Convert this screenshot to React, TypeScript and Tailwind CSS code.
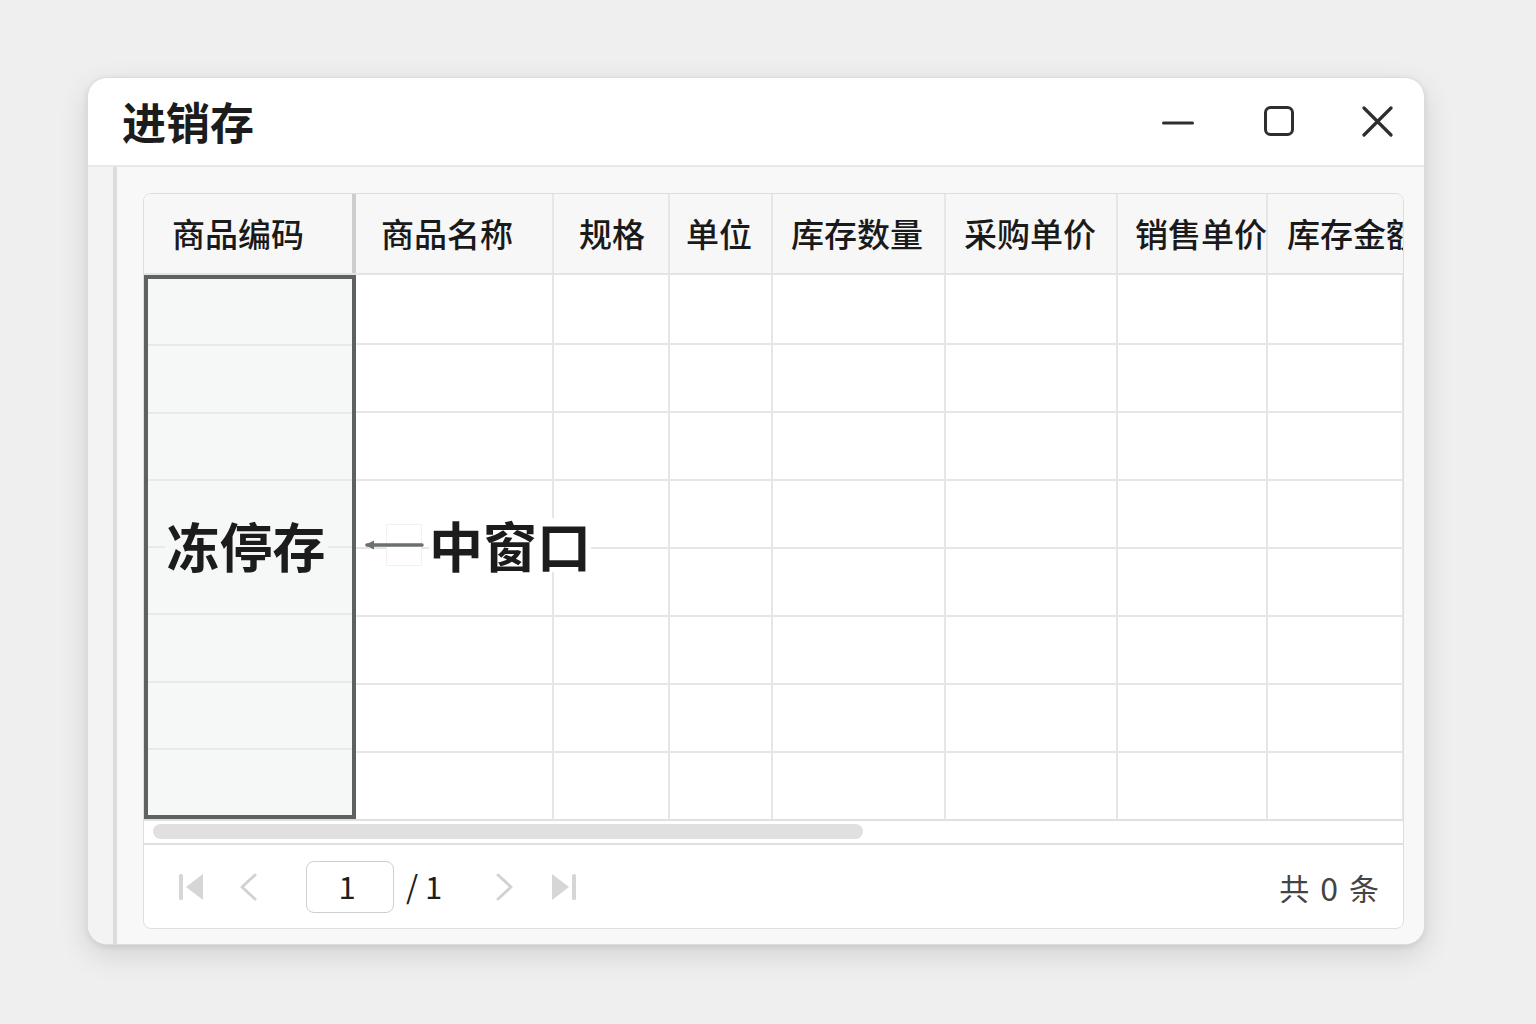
import React from "react";

const FONT = { fontFamily: '"Noto Sans CJK SC", "Noto Sans", sans-serif' };

const headers: { label: string; w: string; pl: string }[] = [
  { label: "商品名称", w: "w-[198px]", pl: "pl-[25px]" },
  { label: "规格", w: "w-[116px]", pl: "pl-[25px]" },
  { label: "单位", w: "w-[103px]", pl: "pl-[16px]" },
  { label: "库存数量", w: "w-[173px]", pl: "pl-[18px]" },
  { label: "采购单价", w: "w-[172px]", pl: "pl-[18px]" },
  { label: "销售单价", w: "w-[150px]", pl: "pl-[17px]" },
  { label: "库存金额", w: "w-[136px]", pl: "pl-[19px]" },
];

const bodyCols = ["w-[198px]", "w-[116px]", "w-[103px]", "w-[173px]", "w-[172px]", "w-[150px]", "w-[136px]"];
const rows = [0, 1, 2, 3, 4, 5, 6, 7];

export default function App() {
  return (
    <div className="min-h-[1024px] w-[1536px] bg-[#efefef] pt-[77px] pl-[87px]" style={FONT}>
      <div className="w-[1338px] h-[868px] bg-white rounded-[20px] border border-[#dcdcdc] shadow-[0_10px_30px_rgba(0,0,0,0.12),0_2px_6px_rgba(0,0,0,0.08)] overflow-hidden flex flex-col">
        {/* title bar */}
        <div className="h-[89px] shrink-0 flex items-center border-b-2 border-[#e8e8e8] pl-[34px] pr-[31px]">
          <div className="text-[44px] font-bold text-[#1c1c1c] leading-none -mt-[2px]">进销存</div>
          <div className="ml-auto flex items-center">
            <svg width="32" height="32" viewBox="0 0 32 32" className="mr-[69px]">
              <line x1="1.5" y1="17" x2="30.5" y2="17" stroke="#2e2e2e" strokeWidth="3" strokeLinecap="round" />
            </svg>
            <svg width="32" height="32" viewBox="0 0 32 32" className="mr-[66px]">
              <rect x="2.5" y="1.5" width="27" height="27" rx="5" fill="none" stroke="#2e2e2e" strokeWidth="3" />
            </svg>
            <svg width="32" height="32" viewBox="0 0 32 32">
              <path d="M3 2 L30 29 M30 2 L3 29" stroke="#2e2e2e" strokeWidth="3.2" strokeLinecap="round" />
            </svg>
          </div>
        </div>

        {/* body */}
        <div className="flex-1 flex bg-[#f8f8f8]">
          <div className="w-[26px] bg-[#f3f3f3]" />
          <div className="w-[4px] bg-[#dcdcdc]" />
          <div className="flex-1 pl-[26px] pt-[26px] pr-[20px]">
            <div className="w-[1261px] h-[736px] bg-white border border-[#dedede] rounded-[8px] overflow-hidden flex flex-col">
              {/* header */}
              <div className="h-[81px] shrink-0 flex bg-[#f7f7f7] border-b-2 border-[#e4e4e4]">
                <div className="w-[212px] shrink-0 flex items-center pl-[28px] border-r-[4px] border-[#cdcdcd] text-[33px] font-medium text-[#1a1a1a] whitespace-nowrap">
                  商品编码
                </div>
                {headers.map((h, i) => (
                  <div
                    key={h.label}
                    className={`${h.w} ${h.pl} shrink-0 flex items-center overflow-visible whitespace-nowrap text-[33px] font-medium text-[#1a1a1a] ${i < headers.length - 1 ? "border-r-2 border-[#e6e6e6]" : ""}`}
                  >
                    {h.label}
                  </div>
                ))}
              </div>

              {/* table body */}
              <div className="relative h-[544px] shrink-0 flex">
                <div className="w-[212px] h-[544px] shrink-0 border-[4px] border-[#5e6362] bg-[#f6f7f7] flex flex-col">
                  {rows.map((r) => (
                    <div key={r} className={`flex-1 ${r > 0 ? "border-t-2 border-[#e8e9e9]" : ""}`} />
                  ))}
                </div>
                <div className="flex-1 flex flex-col">
                  {rows.map((r) => (
                    <div key={r} className={`h-[68px] flex ${r > 0 ? "border-t-2 border-[#e6e6e6]" : ""}`}>
                      {bodyCols.map((c, i) => (
                        <div key={i} className={`${c} shrink-0 border-r-2 border-[#e6e6e6]`} />
                      ))}
                    </div>
                  ))}
                </div>

                {/* annotation overlay */}
                <div className="absolute left-0 top-[239px] h-[62px] flex items-center">
                  <div className="w-[212px] flex justify-center">
                    <span className="bg-[#f6f7f7] text-[53px] font-bold text-[#1c1c1c] leading-none px-[2px] -ml-[8px]">冻停存</span>
                  </div>
                  <div className="relative ml-[8px] w-[62px] h-[42px] flex items-center">
                    <div className="absolute left-[22px] top-0 w-[36px] h-[42px] border border-[#f1f1f1] bg-white" />
                    <svg width="60" height="14" viewBox="0 0 60 14" className="relative">
                      <path d="M3 7 L58 7" stroke="#6b6f6f" strokeWidth="3.5" strokeLinecap="round" />
                      <path d="M1 7 L10 2.5 L10 11.5 Z" fill="#6b6f6f" />
                    </svg>
                  </div>
                  <span className="ml-[3px] bg-white text-[54px] font-bold text-[#1c1c1c] leading-none">中窗口</span>
                </div>
              </div>

              {/* scrollbar */}
              <div className="h-[26px] shrink-0 border-t-2 border-b-2 border-[#e0e0e0] bg-white flex items-center pl-[9px]">
                <div className="w-[710px] h-[15px] rounded-full bg-[#e0e0e0] -mt-[2px]" />
              </div>

              {/* pagination */}
              <div className="flex-1 flex items-center pl-[34px] pr-[24px]">
                <svg width="26" height="28" viewBox="0 0 26 28">
                  <rect x="1" y="1" width="4" height="26" rx="1.5" fill="#d6d6d6" />
                  <path d="M25 1 L8 14 L25 27 Z" fill="#d6d6d6" />
                </svg>
                <svg width="20" height="28" viewBox="0 0 20 28" className="ml-[34px]">
                  <path d="M17 2 L4 14 L17 26" fill="none" stroke="#d2d2d2" strokeWidth="3" strokeLinecap="round" strokeLinejoin="round" />
                </svg>
                <div className="ml-[48px] w-[88px] h-[52px] border border-[#cfcfcf] rounded-[8px] flex items-center justify-center text-[31px] text-[#1e1e1e] pr-[6px]">
                  1
                </div>
                <span className="ml-[12px] text-[31px] text-[#1e1e1e]">/ 1</span>
                <svg width="20" height="28" viewBox="0 0 20 28" className="ml-[53px]">
                  <path d="M3 2 L16 14 L3 26" fill="none" stroke="#d2d2d2" strokeWidth="3" strokeLinecap="round" strokeLinejoin="round" />
                </svg>
                <svg width="26" height="28" viewBox="0 0 26 28" className="ml-[36px]">
                  <path d="M1 1 L18 14 L1 27 Z" fill="#d6d6d6" />
                  <rect x="21" y="1" width="4" height="26" rx="1.5" fill="#d6d6d6" />
                </svg>
                <div className="ml-auto flex items-center gap-[11px] text-[30px] text-[#444] leading-none">
                  <span>共</span>
                  <span className="text-[32px]">0</span>
                  <span>条</span>
                </div>
              </div>
            </div>
          </div>
        </div>
      </div>
    </div>
  );
}
